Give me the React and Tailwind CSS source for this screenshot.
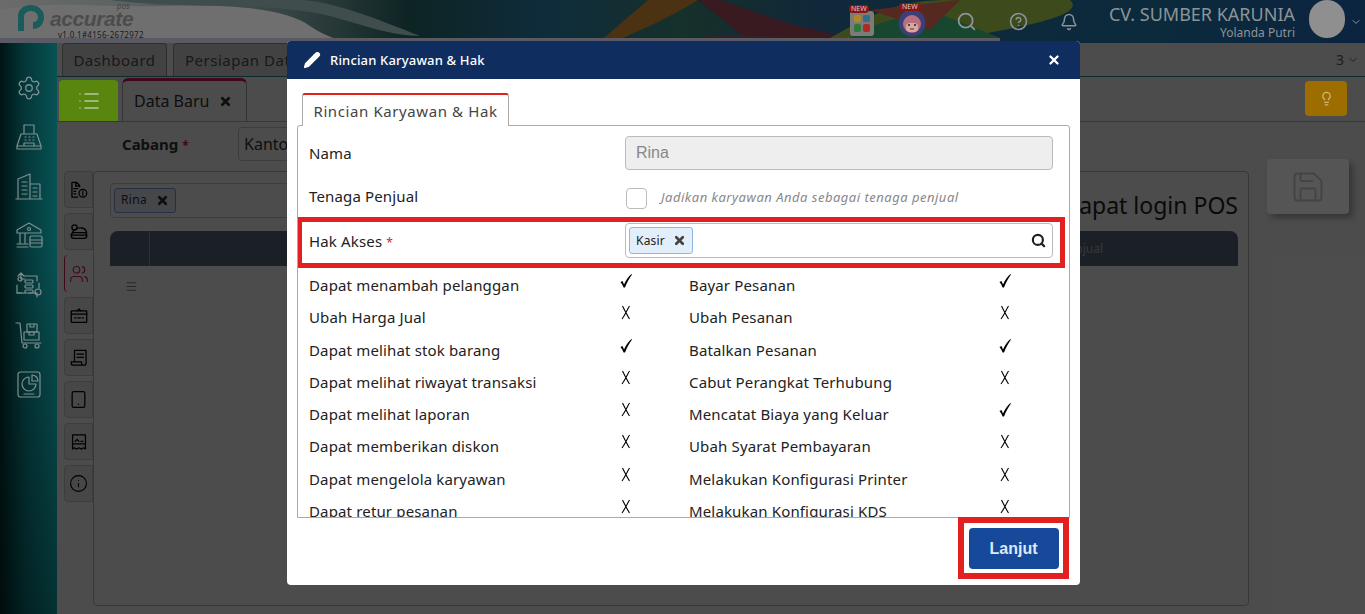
import { Settings, Info, X, Search, Pencil, HelpCircle, Bell, ChevronDown, Lightbulb, Save, Menu, Users, Tablet, List } from "lucide-react";

function Ico({ size = 28, children }) {
  return (
    <svg width={size} height={size} viewBox="0 0 28 28" fill="none" stroke="currentColor" strokeWidth="1.2" strokeLinejoin="round" strokeLinecap="round">
      {children}
    </svg>
  );
}

const Fax = () => (
  <Ico>
    <path d="M9 11V2h10v9M6 11h16l4 12H2zM2 23v3h24v-3M9 23v-3h10v3" />
    <path d="M10 14h1M14 14h1M18 14h1M10 17h1M14 17h1M18 17h1" />
  </Ico>
);
const Towers = () => (
  <Ico>
    <path d="M3 27V7l12-5v25M15 12h10v15M1 27h26M7 10h5M7 14h5M7 18h5M7 22h5M18 16h4M18 20h4M18 24h4" />
  </Ico>
);
const Bank = () => (
  <Ico>
    <path d="M14 1 2 8v3h24V8zM5 11v10M10 11v10M2 25h11M2 22h11" />
    <circle cx="14" cy="7" r="1.5" />
    <rect x="15" y="14" width="12" height="11" rx="1.5" />
    <path d="M15 18h12M15 21h12" />
  </Ico>
);
const Transfer = () => (
  <Ico>
    <path d="M6 2v6h4M3 5l3-3 3 3M10 5h12v5M2 14v8h5M22 26v-4h-8" />
    <rect x="10" y="9" width="8" height="3" rx="1" />
    <rect x="10" y="14" width="8" height="3" rx="1" />
    <rect x="10" y="19" width="8" height="3" rx="1" />
    <circle cx="23" cy="21" r="3" />
    <circle cx="5" cy="8" r="2" />
    <path d="M24 12v5M2 22h8" />
  </Ico>
);
const Cart = () => (
  <Ico>
    <path d="M1 2h4l2 20h19" />
    <rect x="12" y="3" width="10" height="8" />
    <rect x="9" y="11" width="15" height="8" />
    <path d="M15 3v3h4V3M14 11v3h5v-3" />
    <circle cx="10" cy="25" r="2" />
    <circle cx="22" cy="25" r="2" />
  </Ico>
);
const Report = () => (
  <Ico>
    <rect x="3" y="2" width="22" height="25" rx="2.5" />
    <path d="M14 7a7 7 0 1 0 7 7h-7z" />
    <path d="M17 5a6 6 0 0 1 6 6h-6zM9 24h10" />
  </Ico>
);
const DocInfo = () => (
  <Ico size={18}>
    <path d="M15 9V7l-5-5H3v23h9M9 2v6h6M6 12h6M6 16h3M6 20h3" strokeWidth="2" />
    <circle cx="20" cy="19" r="6" strokeWidth="2" />
    <path d="M20 18v4M20 15.5v.5" strokeWidth="2" />
  </Ico>
);
const Coins = () => (
  <Ico size={18}>
    <rect x="2" y="15" width="24" height="9" rx="4" strokeWidth="2" />
    <path d="M2 19h24M4 15c0-3 3-3 4-5 4-3 14-4 17 2l1 3" strokeWidth="2" />
    <circle cx="7" cy="7" r="4" strokeWidth="2" />
  </Ico>
);
const Voucher = () => (
  <Ico size={18}>
    <rect x="2" y="6" width="24" height="18" rx="1" strokeWidth="2" />
    <path d="M2 11h24M11 6l3-3 3 3M7 17h2M19 17h2M12 17h4" strokeWidth="2" />
  </Ico>
);
const Slip = () => (
  <Ico size={18}>
    <path d="M7 20V2h18v20a3 3 0 0 1-3 3H5a3 3 0 0 1-3-3v-2h16v2a3 3 0 0 0 3 3M11 8h10M11 13h10" strokeWidth="2" />
  </Ico>
);
const Printout = () => (
  <Ico size={18}>
    <path d="M4 3h20v22l-3-2-3 2-4-2-4 2-3-2-3 2zM4 17h20" strokeWidth="2" />
    <path d="M8 13l3-3 3 3M17 13h3" strokeWidth="2" />
  </Ico>
);

const sideIcons = [Fax, Towers, Bank, Transfer, Cart, Report];

const tabs = [
  <DocInfo key="a" />,
  <Coins key="b" />,
  <Users key="c" size={20} strokeWidth={1.3} />,
  <Voucher key="d" />,
  <Slip key="e" />,
  <Tablet key="f" size={19} strokeWidth={1.6} />,
  <Printout key="g" />,
  <Info key="h" size={19} strokeWidth={1.4} />,
];

const rows = [
  ["Dapat menambah pelanggan", true, "Bayar Pesanan", true],
  ["Ubah Harga Jual", false, "Ubah Pesanan", false],
  ["Dapat melihat stok barang", true, "Batalkan Pesanan", true],
  ["Dapat melihat riwayat transaksi", false, "Cabut Perangkat Terhubung", false],
  ["Dapat melihat laporan", false, "Mencatat Biaya yang Keluar", true],
  ["Dapat memberikan diskon", false, "Ubah Syarat Pembayaran", false],
  ["Dapat mengelola karyawan", false, "Melakukan Konfigurasi Printer", false],
  ["Dapat retur pesanan", false, "Melakukan Konfigurasi KDS", false],
];

function Mark({ on }) {
  if (on) {
    return (
      <svg width="14" height="15" viewBox="0 0 14 15" className="mt-[3px] text-black">
        <path d="M1.5 9 3.5 8 5 11.5C7 7 9.5 3.5 12.5 1L13 1.6C10.5 5 8.2 9 6 14.5L4.6 14.5C3.8 12.4 2.8 10.6 1.5 9Z" fill="currentColor" />
      </svg>
    );
  }
  return (
    <svg width="14" height="15" viewBox="0 0 14 15" fill="none" stroke="black" strokeWidth="1.1" className="mt-[3px]">
      <path d="M3.5 1C5.5 5 8 10 10.5 14M10.5 1C8 5 6 10 3 14" />
    </svg>
  );
}

function Row({ row }) {
  return (
    <div className="flex h-[32.3px] shrink-0 text-[15px] tracking-[0.15px] text-[#222]">
      <span className="w-[310px] pt-[2px] leading-[26px]">{row[0]}</span>
      <span className="w-[70px]"><Mark on={row[1]} /></span>
      <span className="w-[309px] pt-[2px] leading-[26px]">{row[2]}</span>
      <span className="w-[40px]"><Mark on={row[3]} /></span>
    </div>
  );
}

function HeaderArt() {
  return (
    <svg className="absolute inset-0" width="1365" height="43" viewBox="0 0 1365 43" preserveAspectRatio="none">
      <defs>
        <linearGradient id="base" x1="0" x2="1" y1="0" y2="0">
          <stop offset="0" stopColor="#6b6b6b" />
          <stop offset="0.1" stopColor="#5b6161" />
          <stop offset="0.21" stopColor="#364443" />
          <stop offset="0.3" stopColor="#0d2424" />
          <stop offset="0.4" stopColor="#0f2c3c" />
          <stop offset="0.5" stopColor="#16302a" />
          <stop offset="0.6" stopColor="#10283a" />
          <stop offset="0.85" stopColor="#0b2a3c" />
          <stop offset="1" stopColor="#0b2440" />
        </linearGradient>
      </defs>
      <rect width="1365" height="43" fill="url(#base)" />
      <path d="M0 10C60 0 100 8 160 6 230 4 285 8 310 26 325 36 335 38 345 43H0Z" fill="#6f6f6f" />
      <path d="M110 0C180 10 260 0 330 16 360 24 390 36 420 36 380 20 330 0 300 0Z" fill="#3f4d4c" />
      <path d="M598 43 648 0H698C670 18 640 30 612 43Z" fill="#4a3212" />
      <path d="M698 0 745 38 850 38 790 24 720 0Z" fill="#381a20" />
      <path d="M660 43C720 30 780 36 840 43Z" fill="#34202c" />
      <path d="M830 38C880 10 900 0 950 0L1070 0C1090 18 1000 30 960 38Z" fill="#3c4a1c" />
      <path d="M850 38C880 20 900 16 940 14L1000 38Z" fill="#17472f" />
      <path d="M870 10 960 0 930 30Z" fill="#552820" />
      <rect y="38" width="1000" height="5" fill="#5a5a64" />
    </svg>
  );
}

function Header() {
  return (
    <div className="relative z-10 flex h-[43px] items-center overflow-hidden bg-[#0b2440]">
      <HeaderArt />
      <div className="relative flex w-[287px] items-start pl-[17px]">
        <svg width="28" height="28" viewBox="0 0 28 28">
          <path d="M1 27V12C1 5 7 1 14 1s13 5 13 12c0 8-5 12-11 12v-7c3 0 5-2 5-5s-3-6-7-6-7 3-7 6v14z" fill="#1a5c5c" />
        </svg>
        <div className="relative ml-[5px] mt-[4px] flex flex-col">
          <span className="absolute -top-[7px] left-[67px] text-[8px] italic leading-[9px] text-[#444]">pos</span>
          <span className="text-[21px] leading-[22px] font-bold italic text-[#4c4c4c] font-['Liberation_Sans',sans-serif] tracking-[-0.4px]">accurate</span>
          <span className="ml-[8px] text-[8px] leading-[10px] tracking-[0.3px] text-[#1a1a1a]">v1.0.1#4156-2672972</span>
        </div>
      </div>
      <div className="relative ml-auto flex items-center text-[#8d9497]">
        <div className="relative mr-[24px] mt-[3px] grid h-[25px] w-[24px] grid-cols-2 gap-[2px] rounded-[3px] bg-[#7b7b78] p-[4px]">
          <span className="rounded-[2px] bg-[#b08a28]"></span><span className="rounded-[2px] bg-[#2f6f8c]"></span><span className="rounded-[2px] bg-[#2f7a3a]"></span><span className="rounded-[2px] bg-[#b02a22]"></span>
          <span className="absolute -top-[6px] -left-[1px] rounded-[4px] bg-[#8e1414] px-[2px] text-[7px] leading-[8px] text-[#ccc]">NEW</span>
        </div>
        <div className="relative mr-[30px] mt-[3px] h-[28px] w-[28px]">
          <svg width="28" height="28" viewBox="0 0 28 28">
            <circle cx="14" cy="14" r="13.5" fill="#3a3f78" />
            <circle cx="14" cy="15" r="9" fill="#b8707e" />
            <rect x="8" y="14" width="12" height="9" rx="4" fill="#d8a8a0" />
            <circle cx="11" cy="16" r="1" fill="#222" />
            <circle cx="17" cy="16" r="1" fill="#222" />
            <path d="M12 20h4" stroke="#822" />
          </svg>
          <span className="absolute -top-[6px] left-[1px] rounded-[4px] bg-[#8e1414] px-[3px] text-[7px] leading-[8px] text-[#ccc]">NEW</span>
        </div>
        <Search size={21} className="mr-[32px]" />
        <HelpCircle size={19} className="mr-[32px]" />
        <Bell size={18} className="mr-[31px]" />
        <div className="mr-[14px] flex flex-col items-end">
          <span className="text-[18px] leading-[21px]">CV. SUMBER KARUNIA</span>
          <span className="text-[12px] leading-[15px]">Yolanda Putri</span>
        </div>
        <div className="mr-[5px] h-[38px] w-[36px] -translate-y-[3px] rounded-full bg-[#8f8f8f]"></div>
        <ChevronDown size={12} className="mr-[3px]" />
      </div>
    </div>
  );
}

function Sidebar() {
  return (
    <div className="relative z-10 flex w-[57px] shrink-0 flex-col items-center gap-[21.5px] bg-[linear-gradient(180deg,transparent_35%,rgba(0,0,0,0.4)_100%),linear-gradient(90deg,#001414_0%,#04383a_45%,#085254_100%)] pt-[32px] text-[#7e8f90]">
      <Settings size={26} strokeWidth={1.2} />
      {sideIcons.map((Icon, i) => (
        <Icon key={i} />
      ))}
    </div>
  );
}

function Background() {
  return (
    <div className="flex flex-1 overflow-hidden">
      <Sidebar />
      <div className="flex min-w-0 flex-1 flex-col">
        <div className="flex h-[34px] items-end gap-[6px] border-b border-[#2c8c8c] pl-[5px]">
          <div className="flex h-[33px] w-[105px] items-center justify-center rounded-t-[4px] border border-b-0 border-[#999] bg-[#ddd] text-[15px] tracking-[0.5px] text-[#555]">Dashboard</div>
          <div className="flex h-[33px] w-[200px] items-center rounded-t-[4px] border border-b-0 border-[#999] bg-[#ddd] pl-[11px] text-[15px] tracking-[0.5px] text-[#555]">Persiapan Data</div>
          <div className="ml-auto mr-[6px] flex h-[33px] items-center gap-[3px] pl-[10px] text-[14px] text-[#666]">3 <ChevronDown size={12} /></div>
        </div>
        <div className="flex h-[45px] items-end border-b border-[#bbb] pl-[2px] pt-[2px]">
          <div className="relative z-10 flex h-[41px] w-[59px] items-center justify-center rounded-t-[4px] bg-[#58860f] text-[#b8c8a0]"><List size={24} strokeWidth={1.5} /></div>
          <div className="ml-[4px] flex h-[43px] w-[125px] items-center gap-[10px] rounded-t-[6px] border border-b-0 border-[#aaa] border-t-[3px] border-t-[#e0115f] bg-white pl-[11px] text-[16px] text-[#333]">Data Baru <X size={13} strokeWidth={5} /></div>
          <div className="relative z-10 ml-auto mr-[18px] mb-[5px] flex h-[35px] w-[42px] items-center justify-center rounded-[4px] bg-[#9e6d00] text-[#d0b878]"><Lightbulb size={15} /></div>
        </div>
        <div className="flex flex-1 flex-col pr-[2px]">
          <div className="flex h-[44px] items-center pl-[65px]">
            <span className="w-[116px] text-[15px] font-bold text-[#333]">Cabang <span className="text-[12px] text-[#e0115f]">*</span></span>
            <span className="flex h-[34px] w-[200px] items-center rounded-[4px] border border-[#ccc] bg-white pl-[5px] text-[16px] text-[#333]">Kantor</span>
          </div>
          <div className="flex flex-1">
            <div className="mt-[5px] flex w-[36px] shrink-0 flex-col gap-[5px] pl-[7px]">
              {tabs.map((icon, i) => (
                <div key={i} className={i === 2 ? "flex h-[37px] items-center justify-center rounded-l-[4px] border-l border-l-[#e0115f] bg-white text-[#e0115f]" : "flex h-[37px] items-center justify-center rounded-l-[4px] border border-[#ccc] bg-[#eee] text-black"}>
                  {icon}
                </div>
              ))}
            </div>
            <div className="mb-[8px] mr-[114px] mt-[5px] flex flex-1 flex-col rounded-[4px] border border-[#bbb] bg-white pl-[16px] pr-[10px] pt-[10px]">
              <div className="flex h-[36px] items-center">
                <div className="flex h-[35px] w-[500px] items-center rounded-[4px] border border-[#ccc] pl-[3px]">
                  <span className="flex h-[25px] items-center gap-[9px] rounded-[3px] border border-[#8a9ae0] bg-[#e6effb] px-[6px] text-[12px] tracking-[0.3px] text-[#333]">Rina <X size={13} strokeWidth={5} /></span>
                </div>
                <span className="ml-auto translate-y-[5px] text-[23px] text-[#222]">Dapat login POS</span>
              </div>
              <div className="mt-[13px] flex h-[35px] items-center rounded-t-[8px] bg-[#5a6c84] pr-[135px] text-[12px] text-[#bbb]">
                <span className="h-full w-[40px] border-r border-[#999]"></span>
                <span className="ml-auto">Tenaga Penjual</span>
              </div>
              <Menu size={13} className="mt-[14px] ml-[15px] text-[#888]" />
            </div>
          </div>
        </div>
      </div>
      <div className="absolute right-[16px] top-[159px] z-10 flex h-[55px] w-[82px] items-center justify-center rounded-[4px] bg-[#555] text-[#444] shadow-[4px_4px_6px_rgba(0,0,0,0.3)]"><Save size={36} strokeWidth={1.3} /></div>
    </div>
  );
}

function Modal() {
  return (
    <div className="absolute left-[287px] top-[41px] z-20 flex h-[544px] w-[793px] flex-col rounded-[4px] bg-white">
      <div className="flex h-[38px] shrink-0 items-center rounded-t-[4px] bg-[#0f2d5f] pl-[16px] pr-[19px] text-white">
        <Pencil size={18} fill="white" strokeWidth={1.5} />
        <span className="ml-[9px] pt-[1px] text-[13px] font-medium tracking-[0.17px]">Rincian Karyawan &amp; Hak</span>
        <X size={14} strokeWidth={4} className="ml-auto" />
      </div>
      <div className="flex min-h-0 flex-1 flex-col px-[10px] pt-[14px]">
        <div className="relative z-[1] -mb-px ml-[5px] flex h-[33px] w-[207px] items-center justify-center self-start rounded-t-[3px] border border-b-0 border-[#aaa] border-t-2 border-t-[#e0201c] bg-white pt-[1px] text-[15px] tracking-[0.6px] text-[#444]">Rincian Karyawan &amp; Hak</div>
        <div className="flex h-[393px] flex-col overflow-hidden rounded-t-[3px] border border-[#aaa]">
          <div className="flex h-[54px] shrink-0 items-center pl-[11px] pr-[16px]">
            <span className="w-[316px] text-[15px] tracking-[0.15px] text-[#222]">Nama</span>
            <div className="flex h-[34px] flex-1 items-center rounded-[4px] border border-[#bbb] bg-[#eee] pl-[10px] text-[16px] text-[#888] font-['Liberation_Sans',sans-serif]">Rina</div>
          </div>
          <div className="flex h-[31px] shrink-0 items-center pl-[11px] pt-[1px]">
            <span className="w-[316px] text-[15px] tracking-[0.15px] text-[#222]">Tenaga Penjual</span>
            <span className="mt-[4px] ml-[1px] h-[21px] w-[21px] rounded-[4px] border border-[#bbb] bg-white"></span>
            <span className="mt-[4px] ml-[14px] text-[13px] italic tracking-[0.5px] text-[#888]">Jadikan karyawan Anda sebagai tenaga penjual</span>
          </div>
          <div className="mt-[6px] -ml-px mr-[4px] flex h-[51px] shrink-0 items-start border-[5px] border-[#e32020] pl-[7px] pr-[7px]">
            <span className="mt-[8px] w-[316px] text-[15px] tracking-[0.15px] text-[#222]">Hak Akses <span className="text-[12px] text-[#e32020]">*</span></span>
            <div className="mt-[1px] flex h-[35px] flex-1 items-center rounded-[4px] border border-[#bbb] pl-[3px] pr-[6px]">
              <span className="flex h-[27px] items-center gap-[8px] rounded-[3px] border border-[#8fb8e8] bg-[#e3eefb] px-[6px] text-[12px] tracking-[0.2px] text-[#222]">Kasir <X size={13} strokeWidth={5} className="text-[#444]" /></span>
              <Search size={15} strokeWidth={3.5} className="ml-auto text-[#222]" />
            </div>
          </div>
          <div className="flex min-h-0 flex-1 flex-col pl-[11px] pt-[2px]">
            {rows.map((r) => (
              <Row key={r[0]} row={r} />
            ))}
          </div>
        </div>
        <div className="absolute bottom-[6px] right-[11px] flex h-[62px] w-[111px] items-center justify-center border-[6px] border-[#e32020] bg-white">
          <button className="h-[41px] w-[90px] rounded-[4px] bg-[#17499b] pt-[1px] text-[16px] font-bold text-[#dbe9f8] font-['Liberation_Sans',sans-serif]">Lanjut</button>
        </div>
      </div>
    </div>
  );
}

export default function App() {
  return (
    <div className="relative flex h-[614px] w-[1365px] flex-col overflow-hidden bg-white font-['Noto_Sans',sans-serif]">
      <Header />
      <Background />
      <div className="absolute inset-0 bg-black/70"></div>
      <Modal />
    </div>
  );
}
